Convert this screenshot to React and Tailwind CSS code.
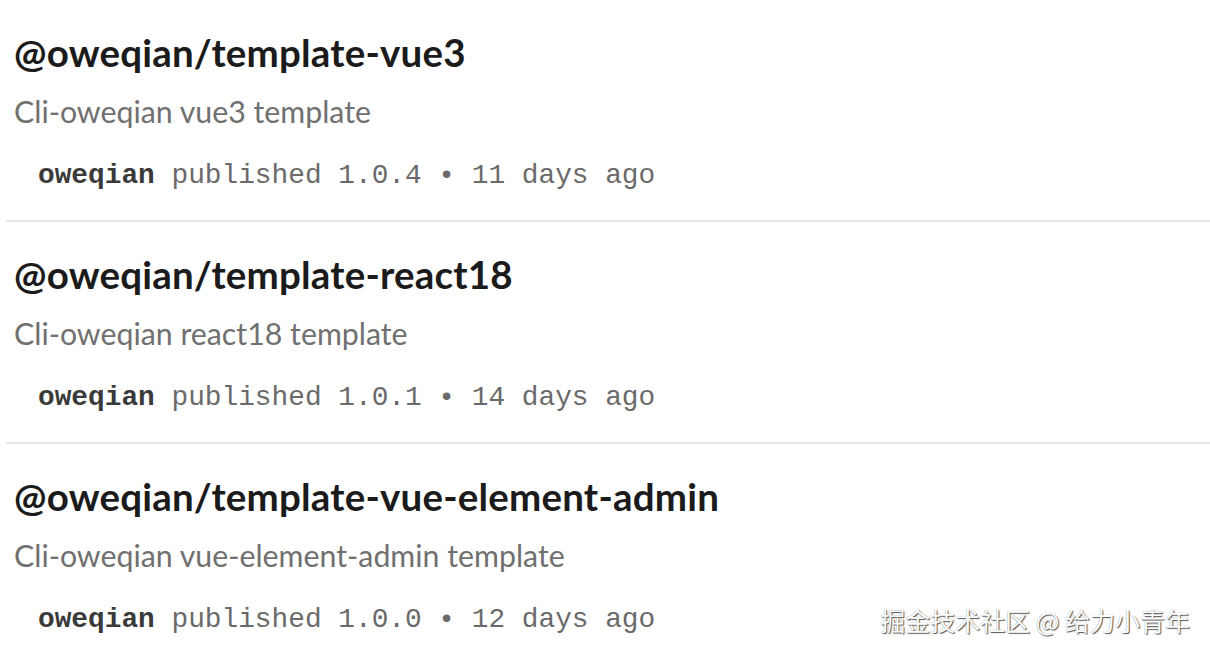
import React from 'react';

const packages = [
  { name: '@oweqian/template-vue3', description: 'Cli-oweqian vue3 template', version: '1.0.4', ago: '11 days ago' },
  { name: '@oweqian/template-react18', description: 'Cli-oweqian react18 template', version: '1.0.1', ago: '14 days ago' },
  { name: '@oweqian/template-vue-element-admin', description: 'Cli-oweqian vue-element-admin template', version: '1.0.0', ago: '12 days ago' },
];

const PackageRow = ({ pkg, last }) => (
  <section className={`px-2 pt-[29px] h-[222px] ${last ? '' : 'border-b-2 border-[#e6e6e6]'}`}>
    <h3 className="text-[38.5px] leading-[46px] font-bold text-[#1b1b1b] tracking-[0.2px]">{pkg.name}</h3>
    <p className="mt-[18px] text-[30.3px] leading-[36px] text-[#707070]">{pkg.description}</p>
    <div className="mt-[30px] pl-6 text-[27.8px] leading-[34px] text-[#6a6a6a]" style={{ fontFamily: '"Liberation Mono", "DejaVu Sans Mono", monospace' }}>
      <span className="font-bold text-[#3a3a3a]">oweqian</span> published {pkg.version} • {pkg.ago}
    </div>
  </section>
);

export default function App() {
  return (
    <div className="relative w-[1210px] h-[654px] overflow-hidden bg-white" style={{ fontFamily: 'Lato, "Noto Sans", sans-serif' }}>
      <div className="pl-[6px]">
        {packages.map((pkg, i) => (
          <PackageRow key={pkg.name} pkg={pkg} last={i === packages.length - 1} />
        ))}
      </div>
      <span
        className="absolute right-[20px] bottom-[19px] text-[25px] leading-[30px] text-white"
        style={{ fontFamily: '"Noto Sans CJK SC", sans-serif', textShadow: '1px 1px 1px #555, 0 0 1px #888' }}
      >
        掘金技术社区 @ 给力小青年
      </span>
    </div>
  );
}
